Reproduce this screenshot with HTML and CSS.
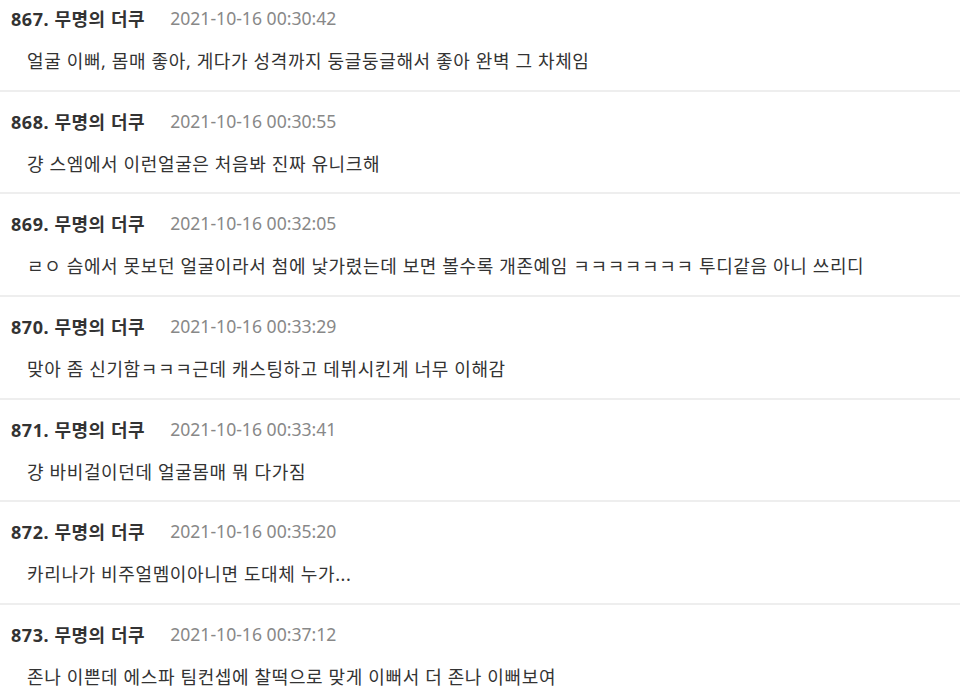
FILE: index.html
```html
<!DOCTYPE html>
<html lang="ko">
<head>
<meta charset="utf-8">
<link rel="stylesheet" href="styles.css">
</head>
<body>
<div class="list">
  <div class="item">
    <div class="head"><span class="num">867. 무명의 더쿠</span><span class="date">2021-10-16 00:30:42</span></div>
    <div class="text">얼굴 이뻐, 몸매 좋아, 게다가 성격까지 둥글둥글해서 좋아 완벽 그 차체임</div>
  </div>
  <div class="item">
    <div class="head"><span class="num">868. 무명의 더쿠</span><span class="date">2021-10-16 00:30:55</span></div>
    <div class="text">걍 스엠에서 이런얼굴은 처음봐 진짜 유니크해</div>
  </div>
  <div class="item">
    <div class="head"><span class="num">869. 무명의 더쿠</span><span class="date">2021-10-16 00:32:05</span></div>
    <div class="text">ㄹㅇ 슴에서 못보던 얼굴이라서 첨에 낯가렸는데 보면 볼수록 개존예임 ㅋㅋㅋㅋㅋㅋㅋ 투디같음 아니 쓰리디</div>
  </div>
  <div class="item">
    <div class="head"><span class="num">870. 무명의 더쿠</span><span class="date">2021-10-16 00:33:29</span></div>
    <div class="text">맞아 좀 신기함ㅋㅋㅋ근데 캐스팅하고 데뷔시킨게 너무 이해감</div>
  </div>
  <div class="item">
    <div class="head"><span class="num">871. 무명의 더쿠</span><span class="date">2021-10-16 00:33:41</span></div>
    <div class="text">걍 바비걸이던데 얼굴몸매 뭐 다가짐</div>
  </div>
  <div class="item">
    <div class="head"><span class="num">872. 무명의 더쿠</span><span class="date">2021-10-16 00:35:20</span></div>
    <div class="text">카리나가 비주얼멤이아니면 도대체 누가...</div>
  </div>
  <div class="item">
    <div class="head"><span class="num">873. 무명의 더쿠</span><span class="date">2021-10-16 00:37:12</span></div>
    <div class="text">존나 이쁜데 에스파 팀컨셉에 찰떡으로 맞게 이뻐서 더 존나 이뻐보여</div>
  </div>
</div>
</body>
</html>
```
FILE: styles.css
```css
html, body {
  margin: 0;
  padding: 0;
  background: #fff;
}
body {
  font-family: "Noto Sans", "Noto Sans CJK KR", sans-serif;
  color: #333;
  overflow: hidden;
}
.list {
  margin-top: -11px;
}
.item {
  height: 83.67px;
  padding: 17px 11px 0;
  border-bottom: 2px solid #eeeeee;
}
.head {
  display: flex;
  align-items: center;
  gap: 25px;
  height: 24px;
}
.num {
  font-size: 18px;
  font-weight: 700;
  letter-spacing: 0.55px;
  color: #333;
}
.date {
  font-size: 17.6px;
  color: #888;
}
.text {
  margin-top: 19px;
  padding-left: 16px;
  font-size: 18px;
  line-height: 24px;
  letter-spacing: 0.63px;
  color: #333;
  white-space: nowrap;
}
```
